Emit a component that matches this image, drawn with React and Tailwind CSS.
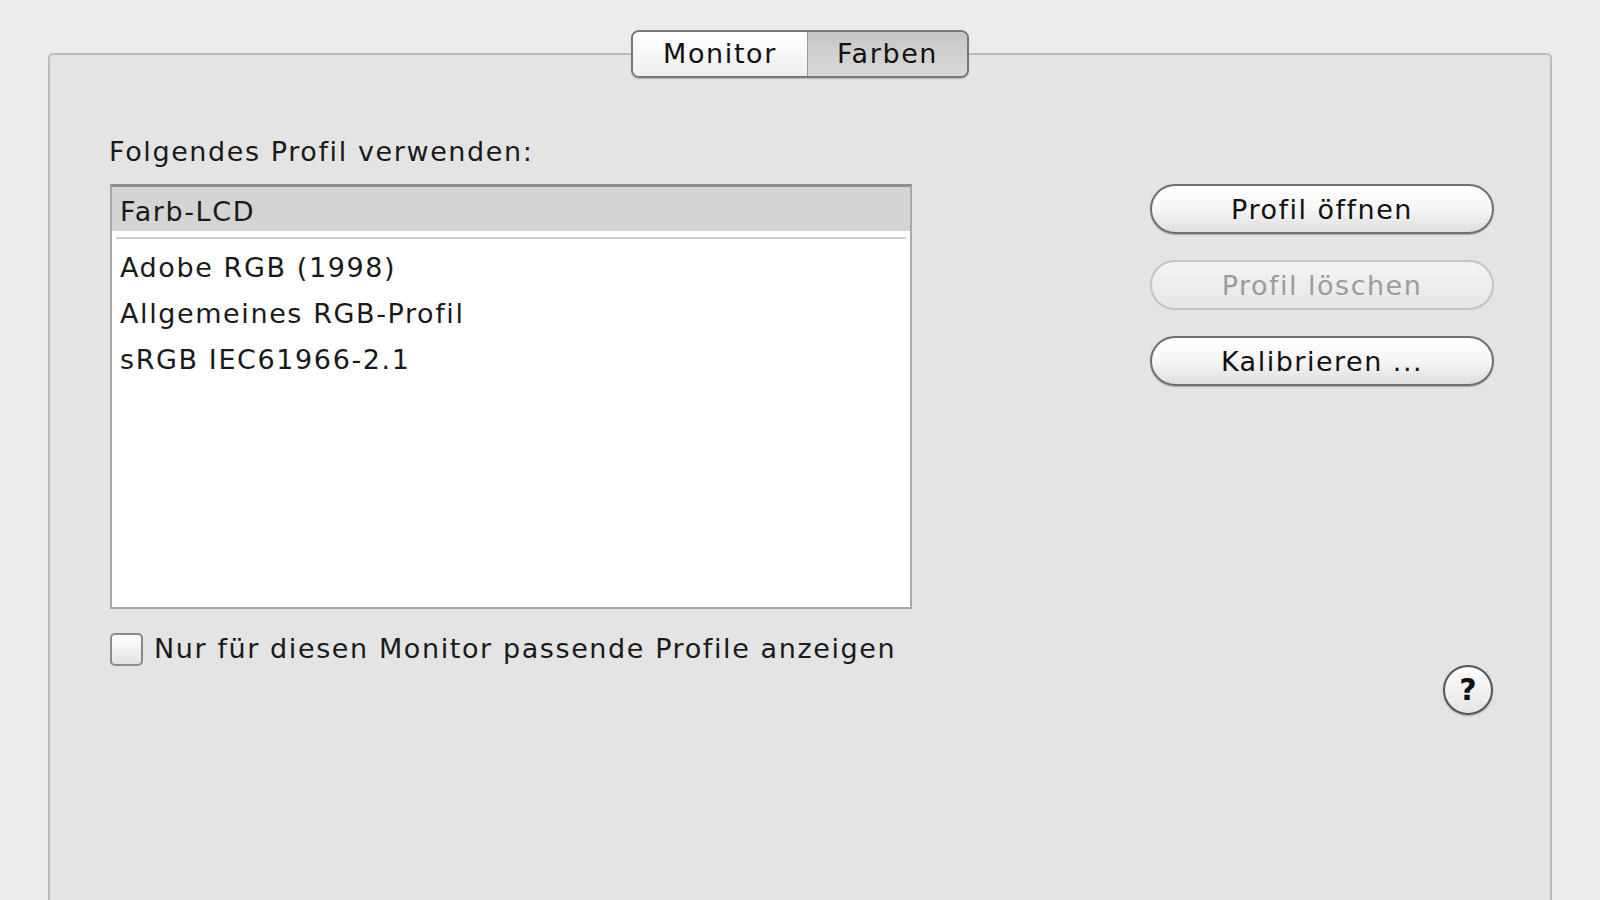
import React from 'react';

const font = { fontFamily: '"DejaVu Sans", Verdana, sans-serif' };

const profiles = ['Adobe RGB (1998)', 'Allgemeines RGB-Profil', 'sRGB IEC61966-2.1'];

const PillButton = ({ label, disabled = false }) => (
    <button
        className={`h-[50px] w-[344px] rounded-full border-2 text-[27px] leading-none tracking-[1.5px] ${
            disabled
                ? 'border-[#c4c4c4] bg-gradient-to-b from-[#f4f4f4] to-[#e6e6e6] text-[#9c9c9c]'
                : 'border-[#6f6f6f] bg-gradient-to-b from-white via-[#f6f6f6] to-[#dedede] text-[#111] shadow-[0_1px_1px_rgba(0,0,0,0.25)]'
        }`}
    >
        {label}
    </button>
);

export default function App() {
    return (
        <div className="h-[900px] w-[1600px] overflow-hidden bg-[#ececec] tracking-[1.6px]" style={font}>
            <div className="ml-[48px] mr-[48px] mt-[53px] h-[900px] rounded-t-[5px] border-2 border-b-0 border-[#bcbcbc] bg-[#e4e4e4]">
                {/* segmented tabs sitting on the top border */}
                <div className="-mt-[25px] flex justify-center">
                    <div className="flex h-[48px] overflow-hidden rounded-[8px] border-2 border-[#777] text-[27px] text-[#111] shadow-[0_1px_1px_rgba(0,0,0,0.2)]">
                        <div className="flex w-[174px] items-center justify-center bg-gradient-to-b from-white to-[#eeeeee]">
                            Monitor
                        </div>
                        <div className="flex w-[160px] items-center justify-center border-l border-[#9a9a9a] bg-gradient-to-b from-[#c6c6c6] to-[#d9d9d9]">
                            Farben
                        </div>
                    </div>
                </div>

                <div className="flex pl-[58px] pt-[59px]">
                    <div className="flex w-[803px] flex-col">
                        <div className="pl-[1px] text-[27px] leading-[30px] text-[#1a1a1a]">Folgendes Profil verwenden:</div>
                        <div className="ml-[2px] mt-[17px] flex h-[425px] w-[802px] flex-col border-2 border-t-[3px] border-[#a9a9a9] border-t-[#8f8f8f] bg-white">
                            <div className="flex h-[44px] items-center bg-[#d4d4d4] pl-[8px] pt-[6px] text-[27px] text-[#1a1a1a]">Farb-LCD</div>
                            <div className="mx-[4px] mt-[6px] h-[2px] bg-[#cfcfcf]" />
                            <div className="flex flex-col pl-[8px] pt-[6px] text-[27px] text-[#1a1a1a]">
                                {profiles.map((p) => (
                                    <div key={p} className="h-[46px] leading-[46px]">
                                        {p}
                                    </div>
                                ))}
                            </div>
                        </div>
                        <div className="ml-[2px] mt-[20px] flex items-center gap-[11px]">
                            <div className="h-[33px] w-[33px] rounded-[5px] border-2 border-[#8a8a8a] bg-gradient-to-b from-white to-[#e2e2e2]" />
                            <span className="text-[27px] text-[#1a1a1a]">Nur für diesen Monitor passende Profile anzeigen</span>
                        </div>
                    </div>

                    <div className="ml-[239px] flex flex-col">
                        <div className="flex flex-col gap-[26px] pt-[47px]">
                            <PillButton label="Profil öffnen" />
                            <PillButton label="Profil löschen" disabled />
                            <PillButton label="Kalibrieren ..." />
                        </div>
                        <div className="mt-[279px] flex justify-end pr-[1px]">
                            <div className="flex h-[50px] w-[50px] items-center justify-center rounded-full border-2 border-[#555] bg-gradient-to-b from-white to-[#e4e4e4] text-[30px] font-bold leading-none tracking-normal text-[#111] shadow-[0_1px_2px_rgba(0,0,0,0.3)]">
                                ?
                            </div>
                        </div>
                    </div>
                </div>
            </div>
        </div>
    );
}
